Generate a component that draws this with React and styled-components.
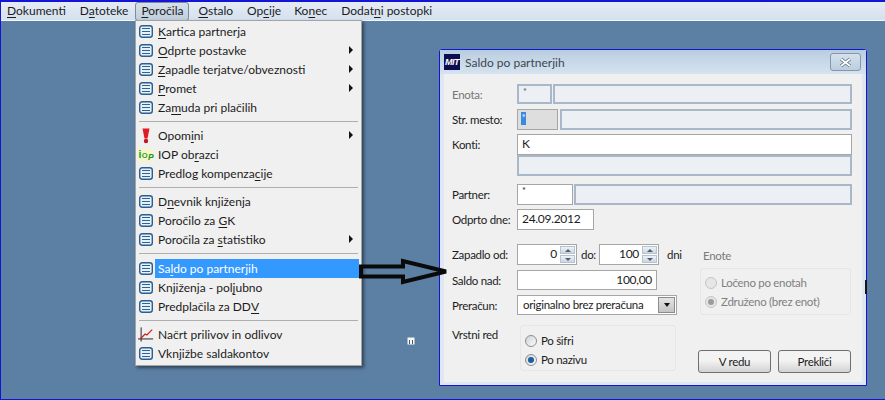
import React from 'react'
import styled, { createGlobalStyle } from 'styled-components'

const FONT = 'Lato, "Noto Sans", sans-serif'

const GlobalStyle = createGlobalStyle`
  html, body {
    margin: 0;
    padding: 0;
    background: #5c7fa4;
  }
  * {
    box-sizing: border-box;
  }
`

const Screen = styled.div`
  position: relative;
  width: 885px;
  height: 400px;
  overflow: hidden;
  background: #5c7fa4;
  border-left: 1px solid #1414d8;
  border-top: 2px solid #1414d8;
  border-bottom: 1px solid #1414d8;
  font-family: ${FONT};
  font-size: 12px;
  color: #1c1c1c;
`
const MenuBar = styled.div`
  display: flex;
  align-items: center;
  height: 19px;
  padding-left: 6px;
  background: linear-gradient(#e3ebf5, #d5e1ee);
  border-bottom: 1px solid #f4f8fc;
`
const MenuTitle = styled.div`
  height: 19px;
  line-height: 18px;
  margin-right: ${props => props.$gap}px;
  padding: 0 ${props => (props.$open ? 5 : 0)}px;
  margin-left: ${props => (props.$open ? -8 : 0)}px;
  white-space: nowrap;
  ${props => props.$open && `
    border: 1px solid #7d8b9a;
    border-radius: 3px;
    line-height: 16px;
    background: linear-gradient(#d6e0eb, #bfcedd);
  `}
`
const Key = styled.span`
  text-decoration: underline;
  text-underline-offset: 2px;
  text-decoration-thickness: 1px;
`

const Dropdown = styled.div`
  position: absolute;
  left: 134px;
  top: 18px;
  width: 227px;
  height: 346px;
  padding-top: 1px;
  background: #f0f0f0;
  border: 1px solid #a4a4a4;
  box-shadow: 2px 2px 3px rgba(20, 30, 40, 0.6);
`
const Row = styled.div`
  position: relative;
  display: flex;
  align-items: center;
  height: 19px;
  padding-left: 2px;
`
const RowIcon = styled.span`
  display: flex;
  justify-content: center;
  align-items: center;
  flex: none;
  width: 16px;
  height: 16px;
`
const RowLabel = styled.span`
  flex: 1;
  align-self: stretch;
  display: flex;
  align-items: center;
  margin-left: 1px;
  margin-right: 2px;
  padding-left: 3px;
  line-height: 19px;
  white-space: pre;
  background: ${props => (props.$active ? '#3399ff' : 'transparent')};
  color: ${props => (props.$active ? '#fff' : 'inherit')};
`
const SubArrow = styled.span`
  position: absolute;
  right: 8px;
  top: 5px;
  width: 0;
  height: 0;
  border-left: 4px solid #111;
  border-top: 4px solid transparent;
  border-bottom: 4px solid transparent;
`
const Separator = styled.div`
  height: ${props => props.$h}px;
  padding-top: 4px;
  &::after {
    content: '';
    display: block;
    margin: 0 3px;
    height: 1px;
    background: #aeaeae;
  }
`

const Arrow = styled.svg`
  position: absolute;
  left: 356px;
  top: 254px;
`
const Speck = styled.svg`
  position: absolute;
  left: 406px;
  top: 335px;
`
const EdgeMark = styled.div`
  position: absolute;
  left: 864px;
  top: 278px;
  width: 2px;
  height: 14px;
  background: #14141c;
`

const Dialog = styled.div`
  position: absolute;
  left: 438px;
  top: 47px;
  width: 428px;
  height: 337px;
  display: flex;
  flex-direction: column;
  border: 1px solid #1414d8;
  border-radius: 3px 3px 0 0;
  background: #dfe8f2;
`
const TitleBar = styled.div`
  display: flex;
  align-items: center;
  flex: none;
  height: 24px;
  padding: 0 5px 0 4px;
  background: linear-gradient(#b9cde0, #d6e3f0);
`
const Logo = styled.span`
  flex: none;
  width: 16px;
  height: 16px;
  background: #0c0c50;
  color: #fff;
  font-family: "Liberation Sans", sans-serif;
  font-size: 9px;
  font-weight: 700;
  font-style: italic;
  line-height: 16px;
  text-align: center;
  letter-spacing: -0.5px;
`
const Title = styled.span`
  flex: 1;
  margin-left: 5px;
  font-size: 12px;
  color: #3d4650;
`
const CloseButton = styled.span`
  display: flex;
  justify-content: center;
  align-items: center;
  width: 31px;
  height: 18px;
  border: 1px solid #8696a8;
  border-radius: 3px;
  background: linear-gradient(#d5e1ed, #bccede);
`
const Body = styled.div`
  flex: 1;
  margin: 0 4px 3px;
  padding: 10px 10px 0 8px;
  background: #f0f0f0;
  font-size: 11.5px;
  letter-spacing: -0.3px;
`
const FieldRow = styled.div`
  display: flex;
  align-items: center;
  height: ${props => props.$h || 21}px;
  margin-top: ${props => props.$mt || 0}px;
`
const Label = styled.label`
  flex: none;
  width: 65px;
  white-space: nowrap;
  color: ${props => (props.$muted ? '#777' : '#1c1c1c')};
`
const Field = styled.div`
  flex: ${props => (props.$w ? 'none' : 1)};
  width: ${props => (props.$w ? `${props.$w}px` : 'auto')};
  height: 100%;
  padding: 0 4px;
  margin-right: ${props => props.$mr || 0}px;
  line-height: ${props => (props.$small ? '12px' : '17px')};
  text-align: ${props => props.$align || 'left'};
  font-size: ${props => (props.$small ? 9 : 12)}px;
  color: ${props => props.$color || '#1c1c1c'};
  background: ${props => props.$bg || '#fff'};
  border: ${props => props.$frame || '1px solid #a6a6a6'};
`
const Off = styled(Field).attrs({ $bg: '#ecf0f5', $frame: '2px solid #a9b8c8' })``
const Selected = styled.span`
  display: inline-block;
  width: 5px;
  height: 13px;
  margin: 2px 0 0 -1px;
  background: #3a8be0;
  color: #fff;
  line-height: 11px;
  text-align: center;
`
const Columns = styled.div`
  display: grid;
  grid-template-columns: 233px 151px;
  column-gap: 15px;
  margin-top: 14px;
`
const Left = styled.div`
  display: flex;
  flex-direction: column;
`
const Right = styled.div`
  display: flex;
  flex-direction: column;
`
const Spin = styled.div`
  display: flex;
  align-items: stretch;
  flex: none;
  width: ${props => props.$w}px;
  height: 21px;
  padding: 1px;
  background: #fff;
  border: 1px solid #a6a6a6;
`
const SpinValue = styled.span`
  flex: 1;
  font-size: 12px;
  line-height: 16px;
  text-align: right;
  padding-right: 3px;
`
const SpinButtons = styled.span`
  display: flex;
  flex-direction: column;
  flex: none;
  width: 15px;
  gap: 1px;
`
const SpinButton = styled.span`
  flex: 1;
  display: flex;
  align-items: center;
  justify-content: center;
  background: linear-gradient(#eef2f6, #ccd6e0);
  border: 1px solid #b6c2ce;
  &::after {
    content: '';
    width: 0;
    height: 0;
    border-left: 3px solid transparent;
    border-right: 3px solid transparent;
    ${props => (props.$up ? 'border-bottom: 3px solid #4d5f75;' : 'border-top: 3px solid #4d5f75;')}
  }
`
const SpinLabel = styled.span`
  flex: none;
  width: 22px;
  padding-left: 4px;
`
const Unit = styled.span`
  flex: none;
  margin-left: 8px;
`
const Combo = styled.div`
  flex: none;
  width: 160px;
  display: flex;
  align-items: stretch;
  height: 100%;
  padding: 1px;
  background: #fff;
  border: 1px solid #a6a6a6;
`
const ComboValue = styled.span`
  flex: 1;
  padding-left: 4px;
  line-height: 16px;
  white-space: nowrap;
`
const ComboButton = styled.span`
  display: flex;
  align-items: center;
  justify-content: center;
  flex: none;
  width: 17px;
  background: linear-gradient(#e4e4e4, #c4c4c4);
  border: 1px solid #8c8c8c;
  &::after {
    content: '';
    width: 0;
    height: 0;
    border-left: 3px solid transparent;
    border-right: 3px solid transparent;
    border-top: 4px solid #111;
  }
`
const OrderRow = styled.div`
  display: flex;
  align-items: flex-start;
  margin-top: 10px;
`
const OrderLabel = styled.span`
  flex: none;
  width: 68px;
  margin-top: 3px;
`
const RadioBox = styled.div`
  display: flex;
  flex-direction: column;
  width: ${props => props.$w || 'auto'};
  height: ${props => props.$h}px;
  padding: ${props => props.$pad};
  border: 1px solid #e6e6e6;
  border-radius: 3px;
  background: #f0f0f0;
`
const RadioRow = styled.div`
  display: flex;
  align-items: center;
  gap: 4px;
  height: 19px;
  color: ${props => (props.$off ? '#7f7f7f' : '#1c1c1c')};
`
const Dot = styled.span`
  position: relative;
  flex: none;
  width: 12px;
  height: 12px;
  border-radius: 50%;
  border: 1px solid ${props => (props.$off ? '#c4c4c4' : '#8b8f94')};
  background: ${props => (props.$off ? '#e6e6e6' : 'linear-gradient(135deg, #d0d3d6, #fafafa)')};
  ${props => props.$on && `
    &::after {
      content: '';
      position: absolute;
      inset: 2px;
      border-radius: 50%;
      background: ${props.$off ? '#9c9c9c' : '#1a5f9e'};
    }
  `}
`
const GroupTitle = styled.span`
  height: 24px;
  padding-left: 3px;
  line-height: 24px;
  color: #7a7a7a;
`
const Buttons = styled.div`
  display: flex;
  justify-content: flex-end;
  gap: 7px;
  margin-top: 35px;
`
const Button = styled.button`
  flex: none;
  width: 73px;
  height: 23px;
  padding: 0;
  font: inherit;
  letter-spacing: inherit;
  color: #1c1c1c;
  border: 1px solid #6f6f6f;
  border-radius: 3px;
  background: linear-gradient(#f3f3f3 45%, #d2d2d2);
`

const ListIcon = () => (
  <svg width="14" height="13" viewBox="0 0 14 13">
    <rect x="0.7" y="0.7" width="12.6" height="11.6" rx="2.5" fill="#e6f0f9" stroke="#2c5f90" strokeWidth="1.4" />
    <path d="M3 3.5h8M3 6.5h8M3 9.5h8" stroke="#2f6394" strokeWidth="1" />
  </svg>
)
const AlertIcon = () => (
  <svg width="14" height="16" viewBox="0 0 14 16">
    <path d="M3.5 0.5h7l-2 10h-3z" fill="#e01b24" />
    <circle cx="7" cy="13" r="2.2" fill="#c8141c" />
  </svg>
)
const IopIcon = () => (
  <svg width="17" height="16" viewBox="0 0 17 16">
    <rect width="16" height="14" y="1" rx="2" fill="#f4f6c4" />
    <text x="0.5" y="11" fontFamily="Liberation Sans" fontWeight="700" fontSize="11" fill="#1d9a2a">i</text>
    <text x="4" y="11" fontFamily="Liberation Sans" fontWeight="700" fontSize="8" fill="#2c9c4a">O</text>
    <text x="10.5" y="13" fontFamily="Liberation Sans" fontWeight="700" fontStyle="italic" fontSize="9" fill="#1d8f2a">P</text>
  </svg>
)
const ChartIcon = () => (
  <svg width="18" height="17" viewBox="0 0 18 17">
    <path d="M3.5 0.5v16M0 13.5h17" stroke="#111" strokeWidth="1" fill="none" />
    <path d="M3 13l5-5 2 1 6-6" stroke="#c81e1e" strokeWidth="1.3" fill="none" />
  </svg>
)

const menus = [
  { label: <><Key>D</Key>okumenti</>, gap: 14 },
  { label: <>D<Key>a</Key>toteke</>, gap: 15 },
  { label: <><Key>P</Key>oročila</>, gap: 9, open: true },
  { label: <><Key>O</Key>stalo</>, gap: 14 },
  { label: <>Op<Key>c</Key>ije</>, gap: 13 },
  { label: <>Ko<Key>n</Key>ec</>, gap: 14 },
  { label: <>Dodat<Key>n</Key>i postopki</>, gap: 0 },
]

const rows = [
  { label: <><Key>K</Key>artica partnerja</> },
  { label: <><Key>O</Key>dprte postavke</>, sub: true },
  { label: <><Key>Z</Key>apadle terjatve/obveznosti</>, sub: true },
  { label: <><Key>P</Key>romet</>, sub: true },
  { label: <>Za<Key>m</Key>uda pri plačilih</> },
  { sep: 9 },
  { label: <>Opom<Key>i</Key>ni</>, icon: <AlertIcon />, sub: true },
  { label: <>IOP ob<Key>r</Key>azci</>, icon: <IopIcon /> },
  { label: <>Predlog kompenza<Key>c</Key>ije</> },
  { sep: 9 },
  { label: <>D<Key>n</Key>evnik knjiženja</> },
  { label: <>Poročilo za <Key>G</Key>K</> },
  { label: <>Poročila za <Key>s</Key>tatistiko</>, sub: true },
  { sep: 10 },
  { label: <>Sa<Key>l</Key>do po partnerjih</>, active: true },
  { label: <>Knjiženja - pol<Key>j</Key>ubno</> },
  { label: <>Predplačila za DD<Key>V</Key></> },
  { sep: 9 },
  { label: <>Načrt prilivov in odlivov</>, icon: <ChartIcon /> },
  { label: <>Vknjižbe saldakontov</> },
]

const Spinner = ({ value, width }) => (
  <Spin $w={width}>
    <SpinValue>{value}</SpinValue>
    <SpinButtons>
      <SpinButton $up />
      <SpinButton />
    </SpinButtons>
  </Spin>
)

export default function App() {
  return (
    <Screen>
      <GlobalStyle />
      <MenuBar>
        {menus.map((m, i) => (
          <MenuTitle key={i} $gap={m.gap} $open={m.open}>{m.label}</MenuTitle>
        ))}
      </MenuBar>

      <Dropdown>
        {rows.map((r, i) => (
          r.sep ? <Separator key={i} $h={r.sep} /> : (
            <Row key={i}>
              <RowIcon>{r.icon || <ListIcon />}</RowIcon>
              <RowLabel $active={r.active}>{r.label}</RowLabel>
              {r.sub && <SubArrow />}
            </Row>
          )
        ))}
      </Dropdown>

      <Speck width="8" height="8" viewBox="0 0 8 8">
        <rect x="0.5" y="0.5" width="7" height="7" fill="#f6f6f6" />
        <path d="M2 3h1v4H2zM5 3h1v4H5z" fill="#556" />
      </Speck>

      <Dialog>
        <TitleBar>
          <Logo>MIT</Logo>
          <Title>Saldo po partnerjih</Title>
          <CloseButton>
            <svg width="15" height="11" viewBox="0 0 15 11">
              <path d="M3 2l9 7M12 2l-9 7" stroke="#59697a" strokeWidth="3.4" />
              <path d="M3 2l9 7M12 2l-9 7" stroke="#fff" strokeWidth="1.8" />
            </svg>
          </CloseButton>
        </TitleBar>
        <Body>
          <FieldRow $h={20}>
            <Label $muted>Enota:</Label>
            <Off $w={35} $mr={1} $small $color="#555">*</Off>
            <Off />
          </FieldRow>
          <FieldRow $mt={5}>
            <Label>Str. mesto:</Label>
            <Field $w={41} $mr={2} $small $bg="#dedede"><Selected>*</Selected></Field>
            <Off />
          </FieldRow>
          <FieldRow $mt={4}>
            <Label>Konti:</Label>
            <Field>K</Field>
          </FieldRow>
          <FieldRow>
            <Label />
            <Off />
          </FieldRow>
          <FieldRow $mt={8}>
            <Label>Partner:</Label>
            <Field $w={56} $mr={1} $small>*</Field>
            <Off />
          </FieldRow>
          <FieldRow $mt={4}>
            <Label>Odprto dne:</Label>
            <Field $w={77}>24.09.2012</Field>
          </FieldRow>
          <Columns>
            <Left>
              <FieldRow>
                <Label>Zapadlo od:</Label>
                <Spinner value="0" width={60} />
                <SpinLabel>do:</SpinLabel>
                <Spinner value="100" width={60} />
                <Unit>dni</Unit>
              </FieldRow>
              <FieldRow $h={20} $mt={5}>
                <Label>Saldo nad:</Label>
                <Field $w={140} $align="right">100,00</Field>
              </FieldRow>
              <FieldRow $h={20} $mt={5}>
                <Label>Preračun:</Label>
                <Combo>
                  <ComboValue>originalno brez preračuna</ComboValue>
                  <ComboButton />
                </Combo>
              </FieldRow>
              <OrderRow>
                <OrderLabel>Vrstni red</OrderLabel>
                <RadioBox $w="156px" $h={46} $pad="5px 0 0 4px">
                  <RadioRow><Dot />Po šifri</RadioRow>
                  <RadioRow><Dot $on />Po nazivu</RadioRow>
                </RadioBox>
              </OrderRow>
            </Left>
            <Right>
              <GroupTitle>Enote</GroupTitle>
              <RadioBox $h={47} $pad="4px 0 0 4px">
                <RadioRow $off><Dot $off />Ločeno po enotah</RadioRow>
                <RadioRow $off><Dot $off $on />Združeno (brez enot)</RadioRow>
              </RadioBox>
              <Buttons>
                <Button>V redu</Button>
                <Button>Prekliči</Button>
              </Buttons>
            </Right>
          </Columns>
        </Body>
      </Dialog>

      <Arrow width="96" height="32" viewBox="0 0 96 32">
        <path d="M4 10.5H46V5L89 15.5L46 26V20.5H4Z" fill="none" stroke="#0a0a0a" strokeWidth="4" />
      </Arrow>
      <EdgeMark />
    </Screen>
  )
}
